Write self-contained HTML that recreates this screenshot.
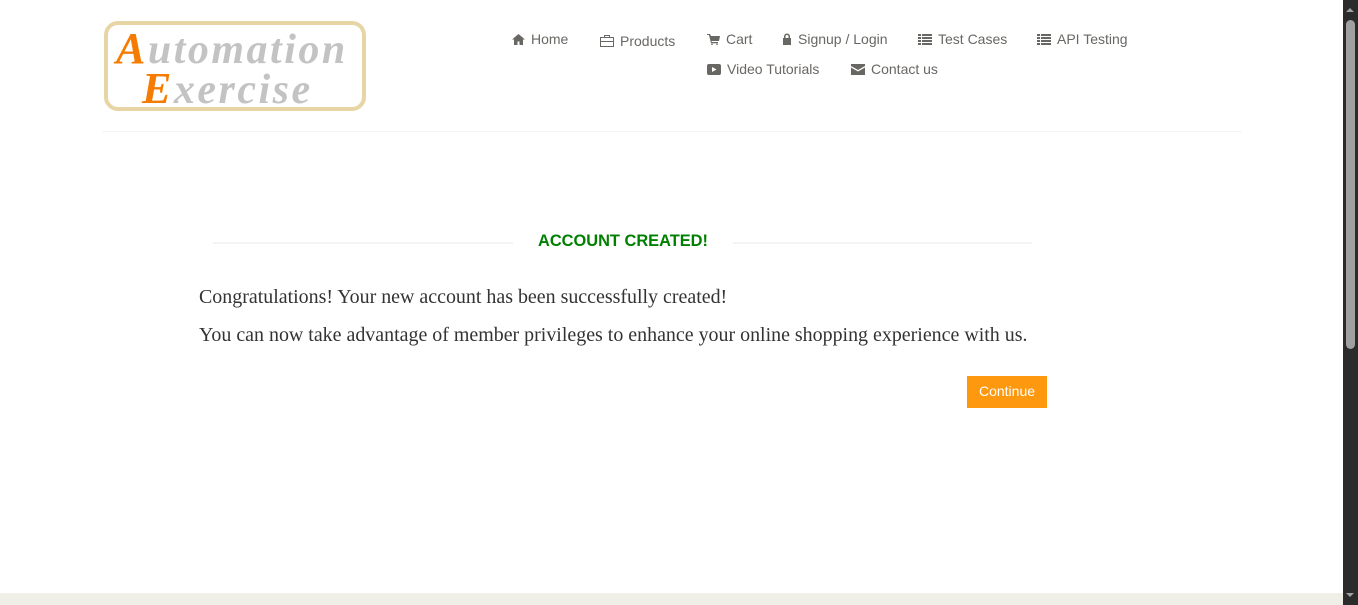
<!DOCTYPE html>
<html><head><meta charset="utf-8"><style>
*{margin:0;padding:0;box-sizing:border-box}
body{width:1358px;height:605px;overflow:hidden;background:#fff;position:relative;font-family:"Liberation Sans",sans-serif}
.logo{position:absolute;left:104px;top:21px;width:262px;height:90px;border:4px solid #e8d5a6;border-radius:14px;background:#fff}
.logo span{position:absolute;font-family:"Liberation Serif",serif;font-style:italic;color:#c3c3c3;font-size:42px;letter-spacing:2.5px;font-weight:bold}
.logo b{color:#f57c00;font-size:44px}
.nav{position:absolute;font-size:14px;color:#696763;white-space:nowrap}
.nav svg{vertical-align:-1px;margin-right:6px;fill:#696763}
hr.h{position:absolute;left:102px;top:131px;width:1140px;border:0;border-top:1px solid #f4f4f4}
.line{position:absolute;top:242px;height:2px;background:#f4f4f4}
h2{position:absolute;left:538px;top:232px;font-size:16.4px;color:#008000;font-weight:bold}
p{position:absolute;left:199px;font-family:"Liberation Serif",serif;font-size:19.95px;color:#333;white-space:nowrap}
.btn{position:absolute;left:967px;top:376px;width:80px;height:32px;background:#fe980f;color:#fff;font-size:14px;text-align:center;line-height:31px}
.foot{position:absolute;left:0;top:593px;width:1343px;height:12px;background:#efefe7}
.sb{position:absolute;left:1343px;top:0;width:15px;height:605px;background:#2b2b2b}
.th{position:absolute;left:1346px;top:20px;width:9px;height:329px;background:#a0a0a0;border-radius:5px}
</style></head><body>
<div class="logo"><span style="left:8px;top:-2px"><b>A</b>utomation</span><span style="left:34px;top:38px"><b>E</b>xercise</span></div>
<div class="nav" style="left:512px;top:31px"><svg width="13" height="11" viewBox="0 0 13 11"><path d="M6.5 0L0 5.5h2V11h3.5V7.5h2V11H11V5.5h2z"/></svg>Home</div>
<div class="nav" style="left:600px;top:33px"><svg width="14" height="12" viewBox="0 0 14 12"><path d="M4 2V0h6v2h4v10H0V2zM5 1v1h4V1zM1 3v3h12V3zM1 7v4h12V7z"/></svg>Products</div>
<div class="nav" style="left:707px;top:31px"><svg width="13" height="11" viewBox="0 0 13 11"><path d="M0 0h3l1 2h9l-1 5H4.5l.3 1H11v1.2H4L2 1H0z"/><circle cx="5" cy="10.3" r=".8"/><circle cx="10" cy="10.3" r=".8"/></svg>Cart</div>
<div class="nav" style="left:782px;top:31px"><svg width="10" height="12" viewBox="0 0 10 12"><path d="M2 5V3.5a3 3 0 016 0V5h1v7H1V5zM3.5 5h3V3.5a1.5 1.5 0 00-3 0z"/></svg>Signup / Login</div>
<div class="nav" style="left:918px;top:31px"><svg width="14" height="11" viewBox="0 0 14 11"><path d="M0 0h3v2H0zM4 0h10v2H4zM0 3h3v2H0zM4 3h10v2H4zM0 6h3v2H0zM4 6h10v2H4zM0 9h3v2H0zM4 9h10v2H4z"/></svg>Test Cases</div>
<div class="nav" style="left:1037px;top:31px"><svg width="14" height="11" viewBox="0 0 14 11"><path d="M0 0h3v2H0zM4 0h10v2H4zM0 3h3v2H0zM4 3h10v2H4zM0 6h3v2H0zM4 6h10v2H4zM0 9h3v2H0zM4 9h10v2H4z"/></svg>API Testing</div>
<div class="nav" style="left:707px;top:61px"><svg width="14" height="11" viewBox="0 0 14 11"><path d="M2 0h10a2 2 0 012 2v7a2 2 0 01-2 2H2a2 2 0 01-2-2V2a2 2 0 012-2zM5 3v5l4.5-2.5z" fill-rule="evenodd"/></svg>Video Tutorials</div>
<div class="nav" style="left:851px;top:61px"><svg width="14" height="11" viewBox="0 0 14 11"><path d="M0 0h14v2L7 6 0 2zM0 3.5l7 4 7-4V11H0z"/></svg>Contact us</div>
<hr class="h">
<div class="line" style="left:213px;width:300px"></div>
<div class="line" style="left:733px;width:299px"></div>
<h2>ACCOUNT CREATED!</h2>
<p style="top:286px">Congratulations! Your new account has been successfully created!</p>
<p style="top:324px">You can now take advantage of member privileges to enhance your online shopping experience with us.</p>
<div class="btn">Continue</div>
<div class="foot"></div>
<div class="sb"></div><div class="th"></div>
<div style="position:absolute;left:1346px;top:8px;width:0;height:0;border-left:4.5px solid transparent;border-right:4.5px solid transparent;border-bottom:4px solid #a0a0a0"></div>
<div style="position:absolute;left:1346px;top:593px;width:0;height:0;border-left:4.5px solid transparent;border-right:4.5px solid transparent;border-top:4px solid #a0a0a0"></div>
</body></html>
